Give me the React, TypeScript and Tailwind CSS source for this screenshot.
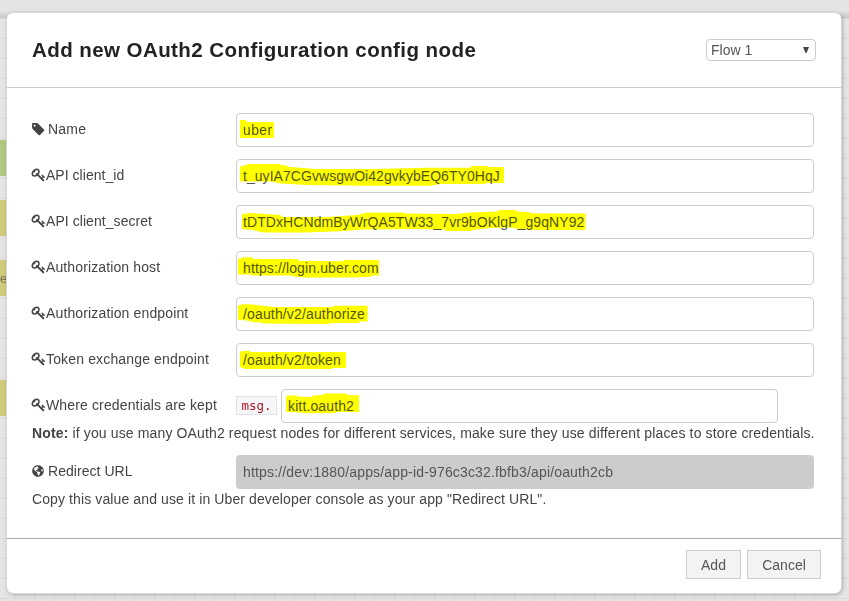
import React from "react";
import { FaGlobeAmericas } from "react-icons/fa";

const KEY_PATH =
  "M832 512q0-80-56-136t-136-56-136 56-56 136q0 42 19 83-41-19-83-19-80 0-136 56t-56 136 56 136 136 56 136-56 56-136q0-42-19-83 41 19 83 19 80 0 136-56t56-136zm851 704q0 17-49 66t-66 49q-9 0-28.5-16t-36.5-33-38.5-40-24.5-26l-96 96 220 220q28 28 28 68 0 42-39 81t-81 39q-40 0-68-28l-671-671q-176 131-365 131-163 0-265.5-102.5t-102.5-265.5q0-160 95-313t248-248 313-95q163 0 265.5 102.5t102.5 265.5q0 189-131 365l355 355 96-96q-3-3-26-24.5t-40-38.5-33-36.5-16-28.5q0-17 49-66t66-49q13 0 23 10 6 6 46 44.5t82 79.5 86.5 86 73 78 28.5 41z";
const TAG_PATH =
  "M576 448q0-53-37.5-90.5t-90.5-37.5-90.5 37.5-37.5 90.5 37.5 90.5 90.5 37.5 90.5-37.5 37.5-90.5zm1067 576q0 53-37 90l-491 492q-39 37-91 37-53 0-90-37l-715-716q-38-37-64.5-101t-26.5-117v-416q0-52 38-90t90-38h416q53 0 117 26.5t102 64.5l715 714q37 39 37 91z";

function KeyIcon() {
  return (
    <svg className="h-[14px] w-[14px] shrink-0 overflow-visible" viewBox="60 60 1740 1740" fill="currentColor">
      <path d={KEY_PATH} />
    </svg>
  );
}

function TagIcon() {
  return (
    <svg className="mr-[2px] h-[14px] w-[14px] shrink-0 overflow-visible" viewBox="120 0 1740 1740" fill="currentColor">
      <path d={TAG_PATH} />
    </svg>
  );
}

/* Marker-pen stroke laid over a field value. */
function Marker({ points }: { points: string }) {
  return (
    <svg className="pointer-events-none absolute -top-px -left-px h-[34px] w-[360px] mix-blend-multiply" viewBox="0 0 360 34">
      <polygon points={points} fill="#ffff00" />
    </svg>
  );
}

function Field({ value, points, className }: { value: string; points: string; className: string }) {
  return (
    <div className={`relative flex h-[34px] items-center rounded-[4px] border border-[#ccc] bg-white pl-[6px] text-[#555] ${className}`}>
      <span className="whitespace-nowrap">{value}</span>
      <Marker points={points} />
    </div>
  );
}

function Label({ icon, text, className }: { icon: React.ReactNode; text: string; className: string }) {
  return (
    <div className="flex h-8 w-[204px] shrink-0 items-center whitespace-nowrap">
      {icon}
      <span className={className}>{text}</span>
    </div>
  );
}

const rows = [
  {
    label: "Name", cls: "tracking-[0.2px]", value: "uber", icon: <TagIcon />, field: "w-[578px] tracking-[0.4px]",
    points: "4,7 10,7 10.5,9 38,9 38,25 4,25",
  },
  {
    label: "API client_id", cls: "tracking-[0.03px]", value: "t_uyIA7CGvwsgwOi42gvkybEQ6TY0HqJ", icon: <KeyIcon />, field: "w-[578px] tracking-[0.05px]",
    points: "4,7.5 10.5,6 12,5 44,5 45,6.3 50.5,6.3 52,7.7 79,10 137,10 190,8.7 234,8.7 236,7 250.6,7 252,8 268,8 268,24 250,24 249,25 204,25 194,26.7 127,26.7 71,26 44,24.5 35.6,22.5 4,22.5",
  },
  {
    label: "API client_secret", cls: "tracking-[0.06px]", value: "tDTDxHCNdmByWrQA5TW33_7vr9bOKlgP_g9qNY92", icon: <KeyIcon />, field: "w-[578px] tracking-[0.08px]",
    points: "6,9 14,8 44,10 47,12 91,12 121,10 131,7.5 168,7.5 169,8.5 220,9 234,7.5 261,6.5 263,5 280,5 281,6.5 293,7 294.5,8.3 349.5,8.5 349.5,25 300.5,25 284,24 274,22.5 254,23 237,25 234,26 210.5,26 209,24.5 179,24 127,24.5 104,26.3 70.6,27.6 27,27.6 17,25 6,24",
  },
  {
    label: "Authorization host", cls: "tracking-[0.12px]", value: "https://login.uber.com", icon: <KeyIcon />, field: "w-[578px] tracking-[0.12px]",
    points: "2,8.3 8,6.3 16.7,6.3 17,8 61.6,8 62,9.7 107,10.3 108,9 143,9 143,24.6 135,24.6 135,26 109,26.6 69,26.6 57,25.5 56.6,24.6 15.6,24.6 15,23.6 2,23.6",
  },
  {
    label: "Authorization endpoint", cls: "tracking-[0.14px]", value: "/oauth/v2/authorize", icon: <KeyIcon />, field: "w-[578px] tracking-[0.15px]",
    points: "2,8.6 6.6,7.3 14,7.3 27,8.7 39,10 97,10 98,8.7 131.6,8.7 131.6,24.6 123,24.6 123,26 94,26 93,27 27,26.6 26,25.5 17,25 9,23.3 2,23",
  },
  {
    label: "Token exchange endpoint", cls: "tracking-[0.15px]", value: "/oauth/v2/token", icon: <KeyIcon />, field: "w-[578px] tracking-[0.15px]",
    points: "4,8.6 13,7.6 14,9 110,9 110,25 96,25 96,26 8,26 8,25 4,24.3",
  },
];

export default function App() {
  return (
    <div className="relative h-[601px] w-[849px] overflow-hidden bg-[#e5e5e5] bg-[linear-gradient(to_right,#d9d9d9_1px,transparent_1px),linear-gradient(to_bottom,#d9d9d9_1px,transparent_1px)] bg-[size:20px_20px] bg-[position:14px_18px] pt-[13px] pl-[7px] font-['Liberation_Sans',Arial,sans-serif] text-[14px] leading-5 text-[#444]">
      <div className="absolute top-0 left-0 h-[18px] w-full bg-[linear-gradient(to_bottom,#e4e4e4_0,#e4e4e4_11px,#c6c6c6_18px)]" />
      <div className="absolute top-[140px] left-0 h-9 w-[7px] bg-[#b1c77f]" />
      <div className="absolute top-[200px] left-0 h-9 w-[7px] bg-[#d0ca7b]" />
      <div className="absolute top-[260px] left-0 flex h-9 w-[7px] items-center overflow-hidden bg-[#d0ca7b] pt-0.5 text-[13px] text-[#77744f]">e</div>
      <div className="absolute top-[380px] left-0 h-9 w-[7px] bg-[#d0ca7b]" />

      <div className="relative flex h-[580px] w-[834px] flex-col rounded-[6px] bg-white shadow-[0_0_0_1px_#d6d6d6,1px_1px_4px_rgba(0,0,0,0.35)]">
        <header className="flex h-[75px] shrink-0 items-center justify-between border-b border-[#ccc] pr-[25px] pl-[25px]">
          <h1 className="text-[20.5px] font-bold tracking-[0.43px] whitespace-nowrap text-[#222]">Add new OAuth2 Configuration config node</h1>
          <div className="flex h-[22px] w-[110px] items-center justify-between rounded-[4px] border border-[#ccc] pr-[6px] pl-1 text-[#555]">
            <span>Flow 1</span>
            <svg className="h-[6px] w-[6px]" viewBox="0 0 6 6"><path d="M0 0H6L3.5 6H2.5Z" fill="#444" /></svg>
          </div>
        </header>

        <main className="flex grow flex-col gap-3 pt-[25px] pl-[25px]">
          {rows.map((r) => (
            <div key={r.label} className="flex h-[34px]">
              <Label icon={r.icon} text={r.label} className={r.cls} />
              <Field value={r.value} points={r.points} className={r.field} />
            </div>
          ))}
          <div>
            <div className="flex h-[34px]">
              <Label icon={<KeyIcon />} text="Where credentials are kept" className="tracking-[0.14px]" />
              <code className="mt-[7px] mr-1 flex h-[19px] w-[41px] items-center justify-center border border-[#e1e1e8] bg-[#f7f7f9] font-['DejaVu_Sans_Mono',monospace] text-[12.5px] text-[#ad1625]">msg.</code>
              <Field
                value="kitt.oauth2"
                className="w-[497px] tracking-[0.13px]"
                points="5,7.6 6.3,6.6 15.6,6.6 17,7.6 30.6,8 32,6.6 42,6 43,4.6 65.6,4.6 66.6,6 78,6.3 78,23 55,23 54,24 25.6,24.3 15.6,23.3 5,23"
              />
            </div>
            <p className="h-5 tracking-[0.134px] whitespace-nowrap"><b>Note:</b> if you use many OAuth2 request nodes for different services, make sure they use different places to store credentials.</p>
          </div>
          <div>
            <div className="flex h-[34px]">
              <Label icon={<FaGlobeAmericas className="mr-1 h-3 w-3 shrink-0" />} text="Redirect URL" className="tracking-[0.04px]" />
              <div className="flex h-[34px] w-[578px] items-center rounded-[4px] bg-[#ccc] pl-[7px] tracking-[0.16px] text-[#555]">
                <span>https://dev:1880/apps/app-id-976c3c32.fbfb3/api/oauth2cb</span>
              </div>
            </div>
            <p className="h-5 tracking-[0.11px] whitespace-nowrap">Copy this value and use it in Uber developer console as your app "Redirect URL".</p>
          </div>
        </main>

        <footer className="flex h-[55px] shrink-0 justify-end gap-[6px] border-t border-[#aaa] pt-[11px] pr-5 text-[#555]">
          <button className="h-[29px] w-[55px] border border-[#ccc] bg-[#f3f3f3]">Add</button>
          <button className="h-[29px] w-[74px] border border-[#ccc] bg-[#f3f3f3]">Cancel</button>
        </footer>
      </div>
    </div>
  );
}
